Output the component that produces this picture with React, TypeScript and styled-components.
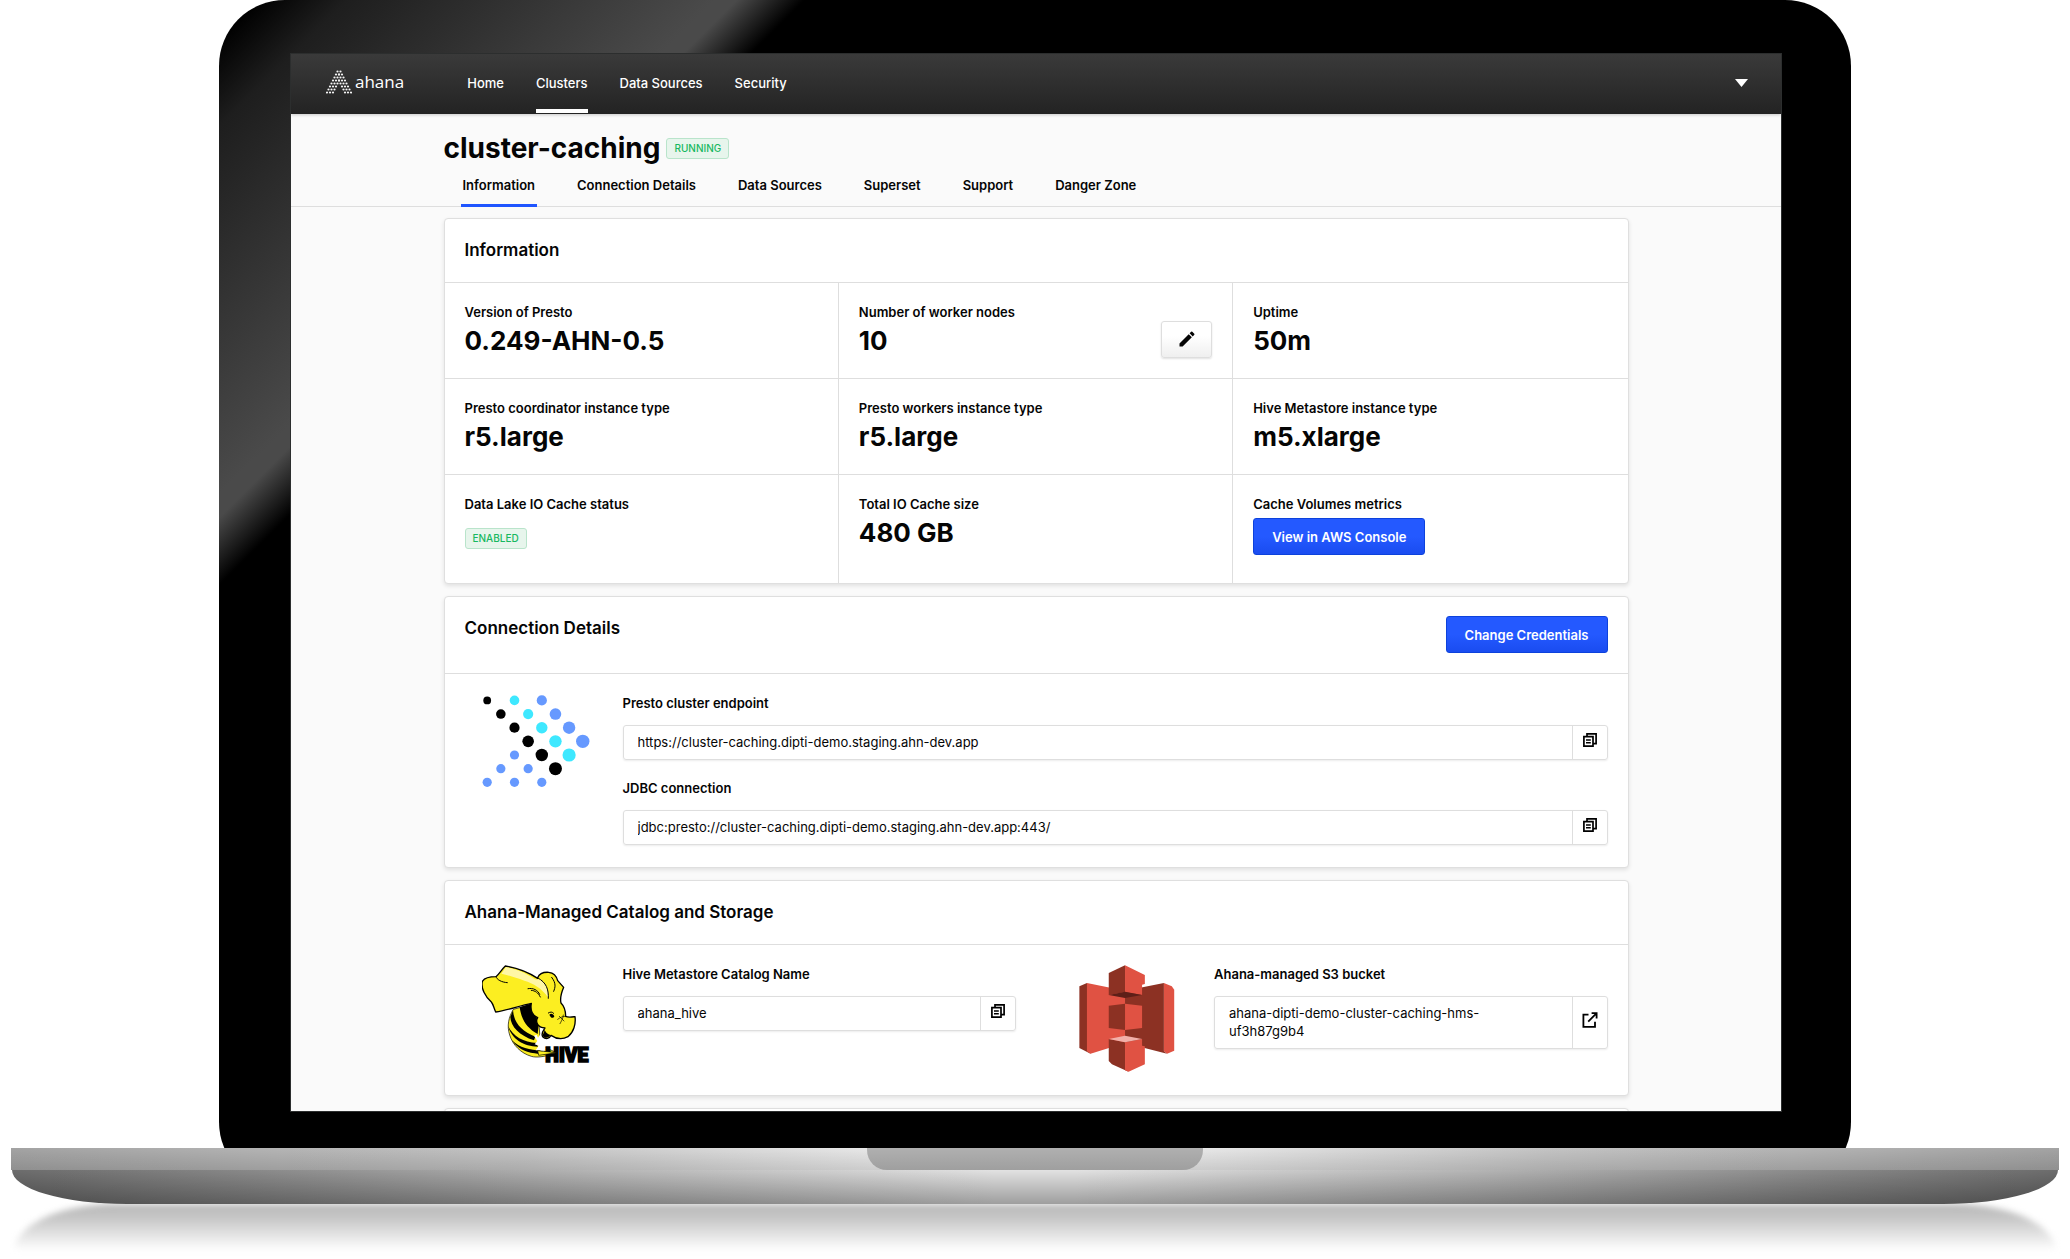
import React from "react";
import styled, { createGlobalStyle, css } from "styled-components";
import { MdEdit } from "react-icons/md";

const GlobalStyle = createGlobalStyle`
  *, *::before, *::after { box-sizing: border-box; }
  body {
    margin: 0;
    background: #fff;
    color: #050505;
    font-family: Inter, "Noto Sans", sans-serif;
    font-size: 13px;
    line-height: 20px;
  }
  a { color: inherit; text-decoration: none; }
  h1, h2, dl, dd, dt { margin: 0; font-weight: 600; }
  button, input, textarea { font: inherit; color: inherit; }
`;

/* ---------- laptop ---------- */

const Stage = styled.div`
  display: flex;
  flex-direction: column;
  overflow: hidden;
`;

const Lid = styled.div`
  margin: 0 219px -40px;
  padding: 54px 70px 77px 72px;
  border-radius: 66px;
  background: linear-gradient(
    135deg,
    #000 26px,
    #1e1e1e 90px,
    #4a4a4a 350px,
    #4a4a4a 366px,
    #000 414px
  );
`;

const Screen = styled.div`
  aspect-ratio: 1490 / 1057;
  overflow: hidden;
  background: #fafafa;
  box-shadow: 0 0 0 1px #2c2e2e;
`;

const Base = styled.div`
  position: relative;
  z-index: 1;
  margin: 0 11px;
`;

const Deck = styled.div`
  display: flex;
  justify-content: center;
  height: 22px;
  background:
    linear-gradient(to bottom, rgba(0, 0, 0, 0), rgba(0, 0, 0, 0.12)),
    linear-gradient(to right, #a3a3a3, #c4c4c4 25%, #e8e8e8 42%, #e8e8e8 58%, #c4c4c4 75%, #a3a3a3);
`;

const Notch = styled.div`
  width: 336px;
  border-radius: 0 0 20px 20px;
  background: linear-gradient(to bottom, #b0b0b0, #9f9f9f);
`;

const Underside = styled.div`
  height: 34px;
  margin: 0 1px;
  border-radius: 0 0 115px 115px / 0 0 34px 34px;
  background:
    linear-gradient(to bottom, rgba(0, 0, 0, 0), rgba(0, 0, 0, 0.3)),
    linear-gradient(to right, #6c6c6c, #8a8a8a 12%, #b4b4b4 28%, #e2e2e2 48%, #e2e2e2 52%, #b4b4b4 72%, #8a8a8a 88%, #6c6c6c);
`;

const Reflection = styled.div`
  height: 55px;
  margin: 0 14px;
  border-radius: 100px 100px 0 0 / 48px 48px 0 0;
  background: linear-gradient(to bottom, #b8b8b8, #c6c6c6 25%, #fff 85%);
  filter: blur(3px);
`;

/* ---------- navigation ---------- */

const TopBar = styled.header`
  display: flex;
  justify-content: space-between;
  height: 60px;
  padding: 0 33px 0 35px;
  color: #fff;
  background: linear-gradient(to bottom, #3a3a3a, #232323);
  box-shadow: 0 1px 3px rgba(0, 0, 0, 0.2);
`;

const BarLeft = styled.div`
  display: flex;
  gap: 63px;
`;

const Brand = styled.a`
  display: flex;
  align-items: center;
  gap: 3px;
  padding-bottom: 4px;
  font-family: "Open Sans", sans-serif;
  font-size: 17px;
`;

const MainNav = styled.nav`
  display: flex;
  gap: 32px;
`;

const NavLink = styled.a<{ $active?: boolean }>`
  display: flex;
  align-items: center;
  margin-bottom: 1px;
  padding-top: 3px;
  border-bottom: 4px solid ${(p) => (p.$active ? "#fff" : "transparent")};
  font-weight: 500;
`;

const AccountButton = styled.button`
  display: flex;
  align-items: center;
  padding: 0 0 2px;
  border: 0;
  background: none;
`;

/* ---------- page header ---------- */

const Container = styled.div`
  max-width: 1185px;
  margin: 0 auto;
`;

const PageHeader = styled.div`
  padding-top: 16px;
  border-bottom: 1px solid #dedede;
`;

const TitleRow = styled.div`
  display: flex;
  align-items: center;
  gap: 6px;
`;

const PageTitle = styled.h1`
  font-size: 28px;
  font-weight: 700;
  line-height: 36px;
`;

const Badge = styled.span`
  display: inline-block;
  padding: 0 7px;
  border: 1px solid #b9e4cb;
  border-radius: 3px;
  background: #e7f5ec;
  color: #18b860;
  font-size: 10px;
  font-weight: 500;
  line-height: 19px;
`;

const Tabs = styled.nav`
  display: flex;
  gap: 38px;
  margin: 9px 0 -1px 17px;
`;

const Tab = styled.a<{ $active?: boolean }>`
  padding: 0 2px 9px;
  border-bottom: 3px solid ${(p) => (p.$active ? "#1f55ff" : "transparent")};
  font-weight: 600;
`;

/* ---------- cards ---------- */

const CardList = styled(Container)`
  display: flex;
  flex-direction: column;
  gap: 12px;
  padding-top: 11px;
`;

const Card = styled.section`
  border: 1px solid #dfdfdf;
  border-radius: 4px;
  background: #fff;
  box-shadow: 0 2px 4px rgba(0, 0, 0, 0.1);
`;

const CardHeader = styled.div`
  display: flex;
  align-items: flex-start;
  justify-content: space-between;
  padding: 19px 20px 20px;
  border-bottom: 1px solid #dedede;
`;

const CardTitle = styled.h2`
  font-size: 17px;
  line-height: 24px;
`;

const buttonBase = css`
  height: 37px;
  border-radius: 3px;
  font-weight: 600;
  cursor: pointer;
`;

const PrimaryButton = styled.button`
  ${buttonBase}
  padding: 0 18px;
  border: 1px solid #0d42dc;
  background: linear-gradient(to bottom, #2459ff 50%, #1a4cf0);
  color: #fff;
`;

const EditButton = styled.button`
  ${buttonBase}
  display: grid;
  place-items: center;
  width: 51px;
  margin-bottom: 2px;
  padding: 0 0 2px;
  border: 1px solid #dedede;
  background: linear-gradient(to bottom, #fff 40%, #efefef);
  box-shadow: 0 1px 2px rgba(0, 0, 0, 0.12);
`;

const Facts = styled.dl`
  display: grid;
  grid-template-columns: repeat(3, 1fr);
`;

const Fact = styled.div`
  display: flex;
  align-items: flex-end;
  justify-content: space-between;
  padding: 19px 20px 18px;
  border-right: 1px solid #dedede;
  border-bottom: 1px solid #dedede;

  &:nth-child(3n) { border-right: 0; }
  &:nth-child(n + 7) { align-items: flex-start; border-bottom: 0; }
`;

const FactValue = styled.dd`
  font-size: 26px;
  font-weight: 700;
  line-height: 38px;
`;

const FactControl = styled.dd<{ $gap: number }>`
  margin: ${(p) => p.$gap}px 0 10px;
`;

const CardBody = styled.div<{ $columns?: number }>`
  display: grid;
  grid-template-columns: repeat(${(p) => p.$columns ?? 1}, 1fr);
  column-gap: 40px;
  padding: 20px 20px 22px;
`;

const Media = styled.div`
  display: grid;
  grid-template-columns: 158px 1fr;
  align-items: start;
`;

const LogoBox = styled.div<{ $inset: number }>`
  display: flex;
  padding-left: ${(p) => p.$inset}px;
`;

const Fields = styled.div`
  display: grid;
  gap: 19px;
`;

const FieldLabel = styled.label`
  display: block;
  margin-bottom: 13px;
  font-weight: 600;
  line-height: 18px;
`;

const FieldBox = styled.div`
  display: flex;
  border: 1px solid #dedede;
  border-radius: 3px;
  box-shadow: 0 1px 2px rgba(0, 0, 0, 0.08);
`;

const valueStyle = css`
  flex: 1;
  min-width: 0;
  padding: 7px 14px 8px;
  border: 0;
  outline: 0;
  background: none;
  line-height: 18px;
`;

const TextInput = styled.input`
  ${valueStyle}
  height: 33px;
`;

const TextArea = styled.textarea`
  ${valueStyle}
  display: block;
  padding-right: 40px;
  overflow: hidden;
  resize: none;
`;

const IconButton = styled.button`
  display: grid;
  place-items: center;
  width: 35px;
  padding: 0 0 5px;
  border: 0;
  border-left: 1px solid #dedede;
  background: none;
  cursor: pointer;
`;

/* ---------- drawings ---------- */

function AhanaMark() {
  const dots: React.ReactNode[] = [];
  for (let row = 0; row < 8; row++) {
    for (let n = 0; n < 3; n++) {
      const offset = 1.5 + row * 1.5 - n * 3;
      if (offset < 0) continue;
      [-offset, offset].forEach((dx) =>
        dots.push(<circle key={`${row}-${n}-${dx}`} cx={13 + dx} cy={1.5 + row * 3} r={1.1} />)
      );
    }
  }
  return (
    <svg width="26" height="24" viewBox="0 0 26 24" fill="#f4f4f4" aria-hidden="true">
      {dots}
    </svg>
  );
}

const K = "#000";
const C = "#3ee8ff";
const B = "#6699ff";
const prestoDots: [number, number, number, string][] = [
  [0, 0, 3.9, K], [2, 0, 4.8, C], [4, 0, 5.1, B],
  [1, 1, 4.8, K], [3, 1, 5.1, C], [5, 1, 5.8, B],
  [2, 2, 5.1, K], [4, 2, 5.7, C], [6, 2, 6.2, B],
  [3, 3, 5.8, K], [5, 3, 6.2, C], [7, 3, 6.7, B],
  [2, 4, 4.6, B], [4, 4, 6.2, K], [6, 4, 6.6, C],
  [1, 5, 4.6, B], [3, 5, 4.6, B], [5, 5, 6.5, K],
  [0, 6, 4.6, B], [2, 6, 4.6, B], [4, 6, 4.6, B],
];

function PrestoLogo() {
  return (
    <svg width="108" height="94" viewBox="0 0 108 94" role="img" aria-label="Presto">
      {prestoDots.map(([col, row, r, fill]) => (
        <circle key={`${col}-${row}`} cx={5.2 + col * 13.65} cy={6.4 + row * 13.65} r={r} fill={fill} />
      ))}
    </svg>
  );
}

function HiveLogo() {
  return (
    <svg width="112" height="108" viewBox="20 22 336 324" role="img" aria-label="Hive">
      <path d="M114 155C100 178 94 205 103 232C112 262 137 287 168 296C184 301 212 297 243 285L196 262L190 190L168 140Z" fill="#fcee21" stroke="#000" strokeWidth="2" />
      <path d="M133 149C138 185 154 211 187 229L190 200C186 180 176 162 166 138Z" />
      <path d="M113 158C116 196 138 220 180 237L176 248C133 234 106 207 105 178Z" />
      <path d="M98 204C112 236 146 254 184 256L188 267C146 266 108 244 98 204Z" />
      <path d="M110 248C132 270 164 278 198 279L243 285C212 288 194 292 178 287C147 285 123 268 110 248Z" />
      <path d="M176 234L184 231L188 240L196 228L205 242L214 246L206 254L213 264L206 284L192 277L181 278L190 264L178 260L186 250Z" fill="#fff" />
      <path d="M187 60C192 48 205 43 220 44C239 46 244 57 247 69L265 89C257 108 254 124 257 136C266 145 271 159 271 176C278 180 290 178 299 177C302 199 295 224 278 237C260 247 240 242 227 233C223 243 211 246 202 237C196 226 204 220 209 211C190 210 178 195 187 180C172 175 164 158 168 137C132 144 97 158 61 163C55 150 54 140 48 133C30 118 16 91 21 71C29 58 46 57 62 57C72 49 80 34 90 25C122 30 158 43 187 62Z" fill="#fcee21" stroke="#000" strokeWidth="4" strokeLinejoin="round" />
      <path d="M92 28C124 34 160 48 194 76C213 91 219 104 219 120C199 91 174 77 147 69C121 60 98 52 78 48Z" fill="#fff7a6" />
      <path d="M195 65C212 78 219 94 218 116L205 92C195 80 180 72 170 66Z" fill="#fff7a6" />
      <g fill="none" stroke="#000" strokeWidth="3" strokeLinecap="round">
        <path d="M158 93C174 90 187 97 193 110M168 98C180 99 188 105 195 118" />
        <path d="M188 61C213 75 220 94 219 122" />
        <path d="M229 59C243 77 240 89 235 101" />
        <path d="M62 57C64 66 79 74 96 75M219 166C225 162 231 162 235 167" />
        <path d="M247 185C257 177 264 176 272 176M252 176L266 190M264 172C263 184 257 192 254 198" strokeWidth="2" />
      </g>
      <path d="M222 171C227 166 234 168 237 176C233 184 226 181 222 171ZM207 212C208 222 215 229 225 232C219 243 206 242 202 234C203 226 209 222 207 212Z" />
      <text x="210" y="312" fontFamily="Roboto, sans-serif" fontSize="58" fontWeight="900" stroke="#000" strokeWidth="5">HIVE</text>
      <path d="M187 279L245 285L190 293Z" fill="#fcee21" stroke="#000" strokeWidth="2" />
    </svg>
  );
}

function S3Logo() {
  const dark = "#8c3123";
  const light = "#e05243";
  return (
    <svg width="96" height="107" viewBox="101 286 242 321" preserveAspectRatio="none" role="img" aria-label="Amazon S3">
      <path fill={dark} d="M102 350L121 340L130 552L102 535Z" />
      <path fill={light} d="M121 340L217 363V520L130 552L121 545Z" />
      <path fill={light} d="M315 340L335 350L341 360V543L323 552L315 545Z" />
      <path fill={dark} d="M217 363L315 340V545L323 552L217 520Z" />
      <path fill={dark} d="M176 408L217 402V481L176 475Z" />
      <path fill={light} d="M217 402L260 408V475L217 481Z" />
      <path fill={dark} d="M176 310L217 287V367L176 376Z" />
      <path fill={light} d="M217 287L267 316V343L260 345V376L217 367Z" />
      <path fill="#5e1f18" d="M176 376L217 366L260 376L217 385Z" />
      <path fill={dark} d="M176 508L217 518V594L226 606L184 584L176 574Z" />
      <path fill={light} d="M217 518L260 508V528L267 530V584L226 606L217 602Z" />
      <path fill="#f2b0a9" d="M176 508L217 498L260 508L217 518Z" />
    </svg>
  );
}

function CopyIcon() {
  return (
    <svg width="14" height="14" viewBox="0 0 14 14" fill="none" stroke="#000" strokeWidth="1.7" aria-hidden="true">
      <path d="M.9 3.6H10V13.1H.9ZM4 3.4V.9H13.1V10.6H10.2" />
      <path d="M3 7H7.8M3 9.8H7.8" strokeWidth="1.4" />
    </svg>
  );
}

function OpenIcon() {
  return (
    <svg width="16" height="16" viewBox="0 0 16 16" fill="none" stroke="#000" strokeWidth="1.8" aria-hidden="true">
      <path d="M6.5 2.6H1.4V14.8H13V9.8M9.6 1.2H14.6V6.4M14.4 1.4L6.2 9.6" />
    </svg>
  );
}

/* ---------- composition ---------- */

function CopyField({ id, label, value }: { id: string; label: string; value: string }) {
  return (
    <div>
      <FieldLabel htmlFor={id}>{label}</FieldLabel>
      <FieldBox>
        <TextInput id={id} value={value} readOnly />
        <IconButton type="button" aria-label={`Copy ${label}`}>
          <CopyIcon />
        </IconButton>
      </FieldBox>
    </div>
  );
}

function TextFact({ label, value, action }: { label: string; value: string; action?: React.ReactNode }) {
  return (
    <Fact>
      <div>
        <dt>{label}</dt>
        <FactValue>{value}</FactValue>
      </div>
      {action}
    </Fact>
  );
}

const navItems = ["Home", "Clusters", "Data Sources", "Security"];
const tabItems = ["Information", "Connection Details", "Data Sources", "Superset", "Support", "Danger Zone"];

export default function App() {
  return (
    <>
      <GlobalStyle />
      <Stage>
        <Lid>
          <Screen>
            <TopBar>
              <BarLeft>
                <Brand href="#">
                  <AhanaMark />
                  ahana
                </Brand>
                <MainNav>
                  {navItems.map((item) => (
                    <NavLink key={item} href="#" $active={item === "Clusters"}>
                      {item}
                    </NavLink>
                  ))}
                </MainNav>
              </BarLeft>
              <AccountButton type="button" aria-label="Account menu">
                <svg width="13" height="8" viewBox="0 0 13 8" fill="#fff" aria-hidden="true">
                  <path d="M0 0H13L6.500 8Z" />
                </svg>
              </AccountButton>
            </TopBar>

            <PageHeader>
              <Container>
                <TitleRow>
                  <PageTitle>cluster-caching</PageTitle>
                  <Badge>RUNNING</Badge>
                </TitleRow>
                <Tabs>
                  {tabItems.map((item) => (
                    <Tab key={item} href="#" $active={item === "Information"}>
                      {item}
                    </Tab>
                  ))}
                </Tabs>
              </Container>
            </PageHeader>

            <CardList>
              <Card>
                <CardHeader>
                  <CardTitle>Information</CardTitle>
                </CardHeader>
                <Facts>
                  <TextFact label="Version of Presto" value="0.249-AHN-0.5" />
                  <TextFact
                    label="Number of worker nodes"
                    value="10"
                    action={
                      <EditButton type="button" aria-label="Edit worker nodes">
                        <MdEdit size={20} />
                      </EditButton>
                    }
                  />
                  <TextFact label="Uptime" value="50m" />
                  <TextFact label="Presto coordinator instance type" value="r5.large" />
                  <TextFact label="Presto workers instance type" value="r5.large" />
                  <TextFact label="Hive Metastore instance type" value="m5.xlarge" />
                  <Fact>
                    <div>
                      <dt>Data Lake IO Cache status</dt>
                      <FactControl $gap={13}>
                        <Badge>ENABLED</Badge>
                      </FactControl>
                    </div>
                  </Fact>
                  <TextFact label="Total IO Cache size" value="480 GB" />
                  <Fact>
                    <div>
                      <dt>Cache Volumes metrics</dt>
                      <FactControl $gap={4}>
                        <PrimaryButton type="button">View in AWS Console</PrimaryButton>
                      </FactControl>
                    </div>
                  </Fact>
                </Facts>
              </Card>

              <Card>
                <CardHeader>
                  <CardTitle>Connection Details</CardTitle>
                  <PrimaryButton type="button">Change Credentials</PrimaryButton>
                </CardHeader>
                <CardBody>
                  <Media>
                    <LogoBox $inset={17}>
                      <PrestoLogo />
                    </LogoBox>
                    <Fields>
                      <CopyField
                        id="endpoint"
                        label="Presto cluster endpoint"
                        value="https://cluster-caching.dipti-demo.staging.ahn-dev.app"
                      />
                      <CopyField
                        id="jdbc"
                        label="JDBC connection"
                        value="jdbc:presto://cluster-caching.dipti-demo.staging.ahn-dev.app:443/"
                      />
                    </Fields>
                  </Media>
                </CardBody>
              </Card>

              <Card>
                <CardHeader>
                  <CardTitle>Ahana-Managed Catalog and Storage</CardTitle>
                </CardHeader>
                <CardBody $columns={2}>
                  <Media>
                    <LogoBox $inset={17}>
                      <HiveLogo />
                    </LogoBox>
                    <CopyField id="catalog" label="Hive Metastore Catalog Name" value="ahana_hive" />
                  </Media>
                  <Media>
                    <LogoBox $inset={23}>
                      <S3Logo />
                    </LogoBox>
                    <div>
                      <FieldLabel htmlFor="bucket">Ahana-managed S3 bucket</FieldLabel>
                      <FieldBox>
                        <TextArea
                          id="bucket"
                          rows={2}
                          value="ahana-dipti-demo-cluster-caching-hms-uf3h87g9b4"
                          readOnly
                        />
                        <IconButton type="button" aria-label="Open bucket">
                          <OpenIcon />
                        </IconButton>
                      </FieldBox>
                    </div>
                  </Media>
                </CardBody>
              </Card>

              <Card>
                <CardBody />
              </Card>
            </CardList>
          </Screen>
        </Lid>
        <Base>
          <Deck>
            <Notch />
          </Deck>
          <Underside />
        </Base>
        <Reflection />
      </Stage>
    </>
  );
}
